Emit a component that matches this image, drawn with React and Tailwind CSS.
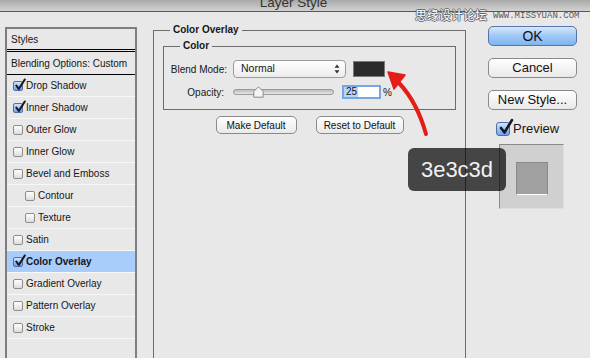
import React from "react";

const layers = [
  { name: "Drop Shadow", checked: true },
  { name: "Inner Shadow", checked: true },
  { name: "Outer Glow" },
  { name: "Inner Glow" },
  { name: "Bevel and Emboss" },
  { name: "Contour", sub: true },
  { name: "Texture", sub: true },
  { name: "Satin" },
  { name: "Color Overlay", checked: true, active: true },
  { name: "Gradient Overlay" },
  { name: "Pattern Overlay" },
  { name: "Stroke" },
];

const CheckMark = ({ big }) =>
  big ? (
    <svg className="absolute left-[1px] top-[-5px]" width="16" height="18" viewBox="0 0 16 18">
      <path d="M3 10 L6.5 14.5 L14 2" fill="none" stroke="#141828" strokeWidth="2.6" strokeLinecap="round" strokeLinejoin="round" />
    </svg>
  ) : (
    <svg className="absolute left-[0px] top-[-4px]" width="13" height="14" viewBox="0 0 13 14">
      <path d="M2.3 7.5 L4.8 11 L10.8 1.5" fill="none" stroke="#141828" strokeWidth="2.1" strokeLinecap="round" strokeLinejoin="round" />
    </svg>
  );

const Checkbox = ({ checked }) => (
  <span
    className={
      checked
        ? "relative shrink-0 w-[10px] h-[10px] rounded-[2px] border border-[#4d6fa3] bg-linear-to-b from-[#d3e4fa] to-[#6ea3e6]"
        : "relative shrink-0 w-[10px] h-[10px] rounded-[2px] border border-[#8d8d8d] bg-linear-to-b from-white to-[#dcdcdc]"
    }
  >
    {checked && <CheckMark />}
  </span>
);

const LayerRow = ({ layer }) => (
  <div
    className={`flex items-center gap-[3px] h-[22px] border-b border-[#f8f8f8] ${
      layer.sub ? "pl-[18px]" : "pl-[6px]"
    } ${layer.active ? "bg-[#a9cdfb] font-bold" : ""}`}
  >
    <Checkbox checked={layer.checked} />
    <span>{layer.name}</span>
  </div>
);

const MacButton = ({ children, className = "" }) => (
  <button
    className={`flex items-center justify-center rounded-[5px] border border-[#8a8a8a] bg-linear-to-b from-white to-[#e9e9e9] text-[#111] ${className}`}
  >
    {children}
  </button>
);

export default function App() {
  return (
    <div className="relative w-[590px] h-[358px] overflow-hidden bg-[#e8e8e8] text-[#161616] font-['Liberation_Sans',Arial,sans-serif]">
      {/* Title bar */}
      <div className="h-[12px] border-b border-[#575757] bg-linear-to-b from-[#a9a9a9] to-[#d2d2d2] flex justify-center overflow-hidden pr-[3px]">
        <span className="-mt-[4px] text-[13.5px] leading-[13px] text-[#333]">Layer Style</span>
      </div>

      <div className="flex items-start text-[10px]">
        {/* Styles list */}
        <div className="shrink-0 ml-[5px] mt-[15px] w-[132px] h-[340px] border-2 border-b-0 border-[#7e7e7e]">
          <div className="h-[20px] flex items-center pl-[4px]">Styles</div>
          <div className="h-px bg-black" />
          <div className="h-px" />
          <div className="h-px bg-black" />
          <div className="h-[23px] flex items-center pl-[4px] border-b border-black">
            Blending Options: Custom
          </div>
          {layers.map((l) => (
            <LayerRow key={l.name} layer={l} />
          ))}
        </div>

        {/* Color Overlay panel */}
        <fieldset className="shrink-0 min-w-0 ml-[16px] mt-[11px] w-[313px] h-[340px] border border-[#6c6c6c] px-[9px]">
          <legend className="ml-[7px] px-[3px] leading-[14px] font-bold">Color Overlay</legend>
          <fieldset className="min-w-0 mt-[2px] border border-[#6c6c6c] pb-[10px]">
            <legend className="ml-[16px] px-[3px] leading-[14px] font-bold">Color</legend>
            <div className="mt-[7px] flex items-center h-[18px]">
              <span className="w-[63px] text-right">Blend Mode:</span>
              <div className="ml-[6px] w-[113px] h-[18px] rounded-[4px] border border-[#9b9b9b] bg-linear-to-b from-white to-[#ececec] flex items-center justify-between pl-[7px] pr-[5px]">
                <span className="text-[10.5px]">Normal</span>
                <svg width="6" height="10" viewBox="0 0 6 10">
                  <path d="M3 0.5 L5.5 3.8 L0.5 3.8 Z M3 9.5 L5.5 6.2 L0.5 6.2 Z" fill="#333" />
                </svg>
              </div>
              <div className="ml-[7px] w-[32px] h-[16px] bg-[#2b2b2b] border border-[#7a7a7a]" />
            </div>
            <div className="mt-[7px] flex items-center h-[14px]">
              <span className="w-[60px] text-right">Opacity:</span>
              <div className="relative ml-[9px] w-[101px] h-[14px] flex items-center">
                <div className="w-full h-[6px] rounded-full border border-[#9a9a9a] bg-linear-to-b from-[#bdbdbd] to-[#e6e6e6]" />
                <svg className="absolute left-[20px] top-[1px]" width="11" height="12" viewBox="0 0 11 12">
                  <path d="M5.5 0.8 L10.2 5.5 L10.2 11.2 L0.8 11.2 L0.8 5.5 Z" fill="#f4f4f4" stroke="#8a8a8a" strokeWidth="1" />
                </svg>
              </div>
              <div className="ml-[8px] w-[39px] h-[14px] border-2 border-[#78a6e3] bg-white flex items-center">
                <span className="bg-[#b6d5fb] h-full flex items-center pl-[2px] pr-[1px] leading-none">25</span>
              </div>
              <span className="ml-[2px]">%</span>
            </div>
          </fieldset>
          <div className="mt-[6px] flex justify-center gap-[19px]">
            <MacButton className="w-[81px] h-[18px] text-[10px]">Make Default</MacButton>
            <MacButton className="w-[88px] h-[18px] text-[10px]">Reset to Default</MacButton>
          </div>
        </fieldset>

        {/* Right buttons */}
        <div className="shrink-0 ml-[22px] mt-[14px] w-[89px] text-[13px]">
          <button className="w-full h-[20px] rounded-[5px] border border-[#5475a8] bg-linear-to-b from-[#d6e7fc] via-[#9fc7f5] to-[#7db6f2] text-[14px] text-[#111] flex items-center justify-center">
            OK
          </button>
          <MacButton className="mt-[12px] w-full h-[20px]">Cancel</MacButton>
          <MacButton className="mt-[12px] w-full h-[20px]">New Style...</MacButton>
          <div className="mt-[12px] ml-[8px] flex items-center gap-[3px] h-[14px]">
            <span className="relative shrink-0 w-[14px] h-[14px] rounded-[3px] border border-[#4d6fa3] bg-linear-to-b from-[#d3e4fa] to-[#6ea3e6]">
              <CheckMark big />
            </span>
            <span>Preview</span>
          </div>
          <div className="mt-[8px] ml-[11px] w-[65px] h-[65px] bg-[#d0d0d0] border border-t-[#8a8a8a] border-l-[#8a8a8a] border-r-[#dedede] border-b-[#dedede] flex items-center justify-center">
            <div className="mt-[3px] w-[32px] h-[33px] bg-[#a0a0a0] border border-[#8a8a8a] border-b-white" />
          </div>
        </div>
      </div>

      {/* Hex tooltip */}
      <div className="absolute left-[408px] top-[148px] w-[98px] h-[43px] rounded-[6px] bg-black/70 flex items-center justify-center text-[22px] text-[#f2f2f2]">
        3e3c3d
      </div>

      {/* Red arrow */}
      <svg className="absolute left-0 top-0" width="590" height="358" viewBox="0 0 590 358">
        <path d="M426 134 Q417 102 399 83" fill="none" stroke="#e41d17" strokeWidth="4" strokeLinecap="round" />
        <path d="M388 72 L405 75 L394 89 Z" fill="#e41d17" stroke="#e41d17" strokeWidth="1.5" strokeLinejoin="round" />
      </svg>

      {/* Watermark */}
      <div className="absolute left-[415px] top-[7px] flex items-center">
        <span className="text-[12px] leading-[15px] text-white font-['Noto_Sans_CJK_SC',sans-serif] [text-shadow:1px_0_0_#666,-1px_0_0_#666,0_1px_0_#666,0_-1px_0_#666]">
          思缘设计论坛
        </span>
        <span className="ml-[6px] mt-[3px] text-[9px] leading-none text-[#5a5a5a] font-['Liberation_Mono',monospace]">
          WWW.MISSYUAN.COM
        </span>
      </div>
    </div>
  );
}
